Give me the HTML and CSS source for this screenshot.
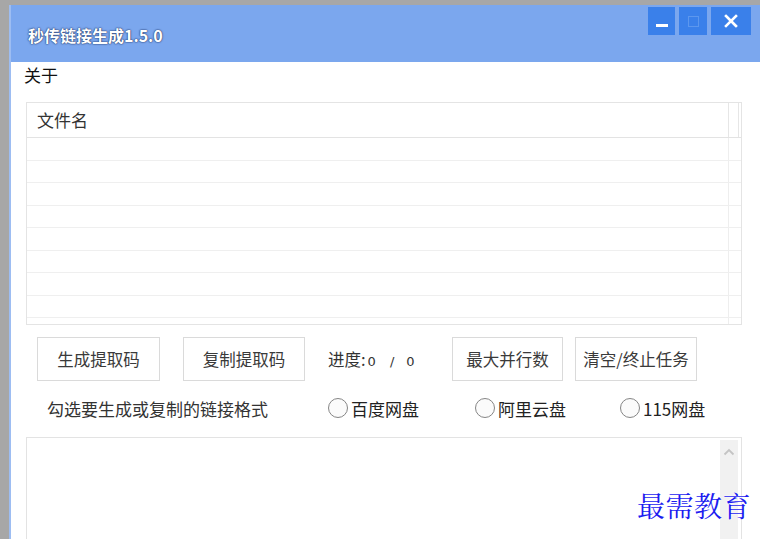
FILE: index.html
```html
<!DOCTYPE html>
<html lang="zh-CN">
<head>
<meta charset="utf-8">
<title>秒传链接生成1.5.0</title>
<link rel="stylesheet" href="styles.css">
</head>
<body>
<div class="screen">
  <div class="window">
    <div class="titlebar">
      <div class="title">秒传链接生成1.5.0</div>
      <div class="controls">
        <div class="ctl ctl-min"><span class="min-bar"></span></div>
        <div class="ctl ctl-max"><span class="max-box"></span></div>
        <div class="ctl ctl-close">
          <svg width="14" height="14" viewBox="0 0 14 14"><path d="M2 2L12 12M12 2L2 12" stroke="#fff" stroke-width="2.6" stroke-linecap="square"/></svg>
        </div>
      </div>
    </div>
    <div class="menubar"><span class="menu-item">关于</span></div>
    <div class="content">
      <div class="listview">
        <div class="lv-head">
          <div class="lv-col">文件名</div>
          <div class="lv-stub"></div>
        </div>
        <div class="lv-body">
          <div class="lv-row"><div class="lv-cell"></div></div>
          <div class="lv-row"><div class="lv-cell"></div></div>
          <div class="lv-row"><div class="lv-cell"></div></div>
          <div class="lv-row"><div class="lv-cell"></div></div>
          <div class="lv-row"><div class="lv-cell"></div></div>
          <div class="lv-row"><div class="lv-cell"></div></div>
          <div class="lv-row"><div class="lv-cell"></div></div>
          <div class="lv-row"><div class="lv-cell"></div></div>
          <div class="lv-row"><div class="lv-cell"></div></div>
        </div>
      </div>
      <div class="actions">
        <button class="btn btn-gen">生成提取码</button>
        <button class="btn btn-copy">复制提取码</button>
        <span class="progress">进度:<span class="num">0</span><span class="num slash">/</span><span class="num last">0</span></span>
        <button class="btn btn-max">最大并行数</button>
        <button class="btn btn-clear">清空/终止任务</button>
      </div>
      <div class="formats">
        <span class="formats-label">勾选要生成或复制的链接格式</span>
        <label class="radio r-baidu"><span class="circle"></span>百度网盘</label>
        <label class="radio r-ali"><span class="circle"></span>阿里云盘</label>
        <label class="radio r-115"><span class="circle"></span>115网盘</label>
      </div>
      <div class="output">
        <div class="scrollbar">
          <svg width="12" height="8" viewBox="0 0 12 8"><path d="M1.5 6.5L6 2L10.5 6.5" fill="none" stroke="#c4c4c4" stroke-width="1.8"/></svg>
        </div>
      </div>
    </div>
  </div>
  <div class="watermark">最需教育</div>
</div>
</body>
</html>
```
FILE: styles.css
```css
* { box-sizing: border-box; }

html, body {
  margin: 0;
  padding: 0;
}

body {
  width: 760px;
  height: 539px;
  overflow: hidden;
  background: #a7a7a7;
  font-family: "Noto Sans CJK SC", "Liberation Sans", sans-serif;
}

.screen {
  position: relative;
  width: 760px;
  height: 539px;
  padding: 5px 0 0 9px;
}

.window {
  width: 751px;
  height: 534px;
  background: #fff;
  border-left: 2px solid #9dbdf2;
  display: flex;
  flex-direction: column;
}

.titlebar {
  height: 57px;
  background: #7ba7ee;
  display: flex;
  justify-content: space-between;
  flex-shrink: 0;
}

.title {
  padding: 22px 0 0 17px;
  font-size: 16px;
  line-height: 16px;
  font-weight: bold;
  color: #fff;
  text-shadow: 0 0 2px rgba(20, 40, 90, 0.9), 0 0 1px rgba(20, 40, 90, 0.9);
}

.controls {
  display: flex;
  gap: 4px;
  margin: 2px 9px 0 0;
  height: 28px;
}

.ctl {
  height: 28px;
  background: #3a80ea;
  display: flex;
  align-items: center;
  justify-content: center;
}

.ctl-min { width: 27px; }
.ctl-max { width: 28px; }
.ctl-close { width: 40px; }

.min-bar {
  width: 12px;
  height: 3px;
  background: #fff;
  margin-top: 9px;
}

.max-box {
  width: 11px;
  height: 11px;
  border: 1px solid #5c97ee;
}

.menubar {
  height: 26px;
  padding-left: 13px;
  flex-shrink: 0;
}

.menu-item {
  font-size: 17px;
  line-height: 26px;
  color: #111;
}

.content {
  padding: 14px 18px 0 15px;
  flex: 1;
  display: flex;
  flex-direction: column;
}

.listview {
  height: 223px;
  border: 1px solid #e4e4e4;
  overflow: hidden;
  flex-shrink: 0;
}

.lv-head {
  display: flex;
  height: 35px;
  border-bottom: 1px solid #e3e3e3;
}

.lv-col {
  flex: 1;
  padding-left: 10px;
  font-size: 17px;
  line-height: 34px;
  color: #333;
  border-right: 1px solid #e6e6e6;
}

.lv-stub {
  width: 10px;
  margin-right: 2px;
  border-right: 1px solid #e6e6e6;
}

.lv-row {
  display: flex;
  height: 22.5px;
  border-bottom: 1px solid #efefef;
}

.lv-cell {
  flex: 1;
  border-right: 1px solid #eeeeee;
}

.lv-row::after {
  content: "";
  width: 12px;
}

.actions {
  display: flex;
  align-items: center;
  margin-top: 12px;
  padding-left: 11px;
  height: 44px;
  flex-shrink: 0;
}

.btn {
  height: 44px;
  background: #fff;
  border: 1px solid #dadada;
  font-family: "Noto Sans CJK SC", "Liberation Sans", sans-serif;
  font-size: 16.5px;
  color: #3a3a3a;
  padding: 0;
}

.btn-gen { width: 123px; }
.btn-copy { width: 122px; margin-left: 23px; }
.btn-max { width: 111px; margin-left: 23px; }
.btn-clear { width: 122px; margin-left: 12px; }

.progress {
  width: 101px;
  margin-left: 23px;
  font-size: 16.5px;
  color: #333;
  white-space: nowrap;
}

.progress .num {
  font-family: "DejaVu Sans", sans-serif;
  font-size: 13px;
  margin-left: 2px;
}

.progress .slash { margin-left: 14px; }
.progress .last { margin-left: 12px; }

.formats {
  display: flex;
  align-items: center;
  height: 30px;
  margin-top: 12px;
  flex-shrink: 0;
}

.formats-label {
  width: 302px;
  padding-left: 21px;
  font-size: 17px;
  color: #333;
}

.radio {
  display: flex;
  align-items: center;
  font-size: 17px;
  color: #222;
}

.r-baidu { width: 147px; }
.r-ali { width: 145px; }

.circle {
  width: 20px;
  height: 20px;
  border: 1.5px solid #858585;
  border-radius: 50%;
  background: #fbfbfb;
  margin-right: 3px;
}

.output {
  margin-top: 14px;
  flex: 1;
  border: 1px solid #e3e3e3;
  border-bottom: none;
  display: flex;
  justify-content: flex-end;
  padding: 2px 3px 0 0;
}

.scrollbar {
  width: 18px;
  background: #f1f1f1;
  display: flex;
  justify-content: center;
  padding-top: 8px;
}

.watermark {
  position: absolute;
  left: 637px;
  top: 488px;
  font-family: "Noto Serif CJK SC", "AR PL UKai CN", "Noto Sans CJK SC", serif;
  font-size: 28px;
  line-height: 34px;
  color: #1c1cf0;
  letter-spacing: 0.5px;
  text-shadow: 0 0 2px #fff, 0 0 2px #fff;
}
```
